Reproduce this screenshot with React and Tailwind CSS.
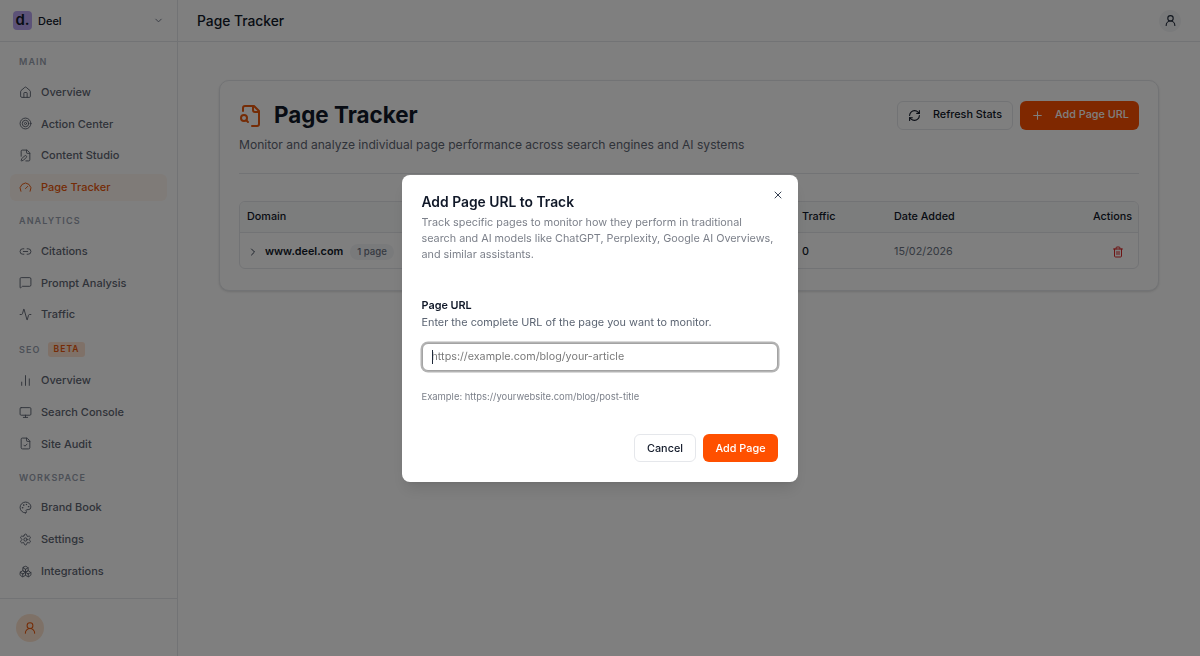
import {
  Activity,
  Boxes,
  ChartNoAxesColumn,
  ChevronDown,
  ChevronRight,
  FileCheck,
  FilePen,
  Gauge,
  House,
  Link2,
  MessageSquare,
  Monitor,
  Palette,
  Plus,
  RefreshCw,
  Settings,
  Target,
  Trash2,
  UserRound,
  X,
} from 'lucide-react'

const sections = [
  {
    title: 'MAIN',
    items: [
      { label: 'Overview', icon: House },
      { label: 'Action Center', icon: Target },
      { label: 'Content Studio', icon: FilePen },
      { label: 'Page Tracker', icon: Gauge, active: true },
    ],
  },
  {
    title: 'ANALYTICS',
    items: [
      { label: 'Citations', icon: Link2 },
      { label: 'Prompt Analysis', icon: MessageSquare },
      { label: 'Traffic', icon: Activity },
    ],
  },
  {
    title: 'SEO',
    beta: true,
    items: [
      { label: 'Overview', icon: ChartNoAxesColumn },
      { label: 'Search Console', icon: Monitor },
      { label: 'Site Audit', icon: FileCheck },
    ],
  },
  {
    title: 'WORKSPACE',
    items: [
      { label: 'Brand Book', icon: Palette },
      { label: 'Settings', icon: Settings },
      { label: 'Integrations', icon: Boxes },
    ],
  },
]

// lens sits outside the sheet, lucide's FileSearch has it inside now
function PageSearchIcon() {
  return (
    <svg
      className="h-[24px] w-[24px] shrink-0 text-[#ea580c]"
      viewBox="0 0 24 24"
      fill="none"
      stroke="currentColor"
      strokeWidth="2"
      strokeLinecap="round"
      strokeLinejoin="round"
    >
      <path d="M14 2v4a2 2 0 0 0 2 2h4" />
      <path d="M13 22h5a2 2 0 0 0 2-2V7l-5-5H6a2 2 0 0 0-2 2v3" />
      <circle cx="5" cy="14" r="3" />
      <path d="m9 18-1.5-1.5" />
    </svg>
  )
}

function Sidebar() {
  return (
    <aside className="flex h-full w-[178px] shrink-0 flex-col border-r border-gray-200 bg-white">
      <div className="flex h-[42px] shrink-0 items-center border-b border-gray-200 pl-[13px] pr-[13px]">
        <div className="flex h-[19px] w-[19px] items-center justify-center rounded-[4px] bg-[#b9a5f0] text-[15px] font-semibold leading-none text-gray-900">
          <span className="-mt-[2px]">d.</span>
        </div>
        <span className="ml-[6px] mt-[1px] flex-1 text-[11px] font-medium text-gray-900">Deel</span>
        <ChevronDown className="h-[11px] w-[11px] text-gray-500" />
      </div>
      <nav className="flex-1 pt-[13px]">
        {sections.map((section) => (
          <div key={section.title} className={`mb-[13px] px-[10px] ${section.beta ? 'pt-[1px]' : ''}`}>
            <div className="flex h-[14px] items-center gap-[8px] px-[9px] text-[9px] font-semibold tracking-[0.12em] text-gray-400">
              {section.title}
              {section.beta && (
                <span className="rounded-[3px] bg-[#ffe3d1] px-[5px] py-[3px] text-[8.5px] font-semibold leading-[9px] text-[#ea580c]">BETA</span>
              )}
            </div>
            <ul className={`flex flex-col gap-[4.6px] ${section.beta ? 'mt-[10.5px]' : 'mt-[9.5px]'}`}>
              {section.items.map((item) => (
                <li
                  key={item.label}
                  className={`flex h-[27.2px] items-center gap-[9px] rounded-[6px] px-[9px] text-[11px] font-medium ${
                    item.active ? 'bg-[#fff6f0] text-[#ea580c]' : 'text-[#5f6673]'
                  }`}
                >
                  <item.icon className="h-[13px] w-[13px] shrink-0" strokeWidth={1.75} />
                  {item.label}
                </li>
              ))}
            </ul>
          </div>
        ))}
      </nav>
      <div className="flex h-[60px] shrink-0 items-center border-t border-gray-200 pl-[16px]">
        <div className="flex h-[28px] w-[28px] items-center justify-center rounded-full bg-[#fde3cf] text-[#ea580c]">
          <UserRound className="h-[14px] w-[14px]" strokeWidth={1.75} />
        </div>
      </div>
    </aside>
  )
}

function PageCard() {
  return (
    <section className="rounded-[10px] border border-gray-200 bg-white p-[19px] pb-[21px] shadow-sm">
      <div className="flex items-start justify-between">
        <div>
          <div className="mt-[1px] flex items-center gap-[11px]">
            <PageSearchIcon />
            <h1 className="-mt-[1px] text-[22.4px] font-bold leading-[30px] text-gray-900">Page Tracker</h1>
          </div>
          <p className="mt-[6px] text-[12.08px] leading-[18px] text-[#5f6673]">
            Monitor and analyze individual page performance across search engines and AI systems
          </p>
        </div>
        <div className="mt-[1px] flex gap-[7px]">
          <button className="flex h-[29px] w-[116px] items-center rounded-[6px] border border-gray-200 bg-white pl-[10px] text-[10.8px] font-medium text-gray-900">
            <RefreshCw className="h-[13px] w-[13px]" />
            <span className="ml-[12px]">Refresh Stats</span>
          </button>
          <button className="flex h-[29px] w-[119px] items-center rounded-[6px] bg-[#ff5000] pl-[11px] text-[10.8px] font-medium text-white">
            <Plus className="h-[13px] w-[13px]" />
            <span className="ml-[11px]">Add Page URL</span>
          </button>
        </div>
      </div>
      <div className="mt-[19px] border-t border-gray-200" />
      <div className="mt-[27px] overflow-hidden rounded-[6px] border border-gray-200 text-[10.8px]">
        <div className="grid h-[31px] grid-cols-[555px_92px_1fr_60px] items-center border-b border-gray-200 bg-gray-50 pl-[7px] pr-[6px] font-medium text-gray-900">
          <span>Domain</span>
          <span>Traffic</span>
          <span>Date Added</span>
          <span className="text-right">Actions</span>
        </div>
        <div className="grid h-[35px] grid-cols-[555px_92px_1fr_60px] items-center pl-[7px] pr-[6px] pt-[3px]">
          <div className="flex items-center">
            <ChevronRight className="h-[12px] w-[12px] text-gray-700" />
            <span className="ml-[6px] font-semibold text-gray-900">www.deel.com</span>
            <span className="ml-[7px] rounded-full bg-gray-100 px-[7px] py-[1px] text-[9.6px] font-medium text-gray-500">1 page</span>
          </div>
          <span className="font-medium text-gray-900">0</span>
          <span className="text-gray-500">15/02/2026</span>
          <div className="flex justify-end pr-[8px]">
            <Trash2 className="h-[12px] w-[12px] text-[#dc2626]" />
          </div>
        </div>
      </div>
    </section>
  )
}

function AddPageModal() {
  return (
    <div className="fixed inset-0 flex items-center justify-center bg-black/50">
      <div className="relative w-[396px] rounded-[8px] bg-white pb-[20px] pl-[19.5px] pr-[20px] pt-[18px] shadow-lg">
        <X className="absolute right-[14px] top-[14px] h-[12px] w-[12px] text-gray-700" />
        <h2 className="text-[13.85px] font-semibold leading-[18px] text-gray-900">Add Page URL to Track</h2>
        <p className="mt-[4px] text-[10.8px] leading-[16px] text-[#7c808a]">
          Track specific pages to monitor how they perform in traditional search and AI models like ChatGPT, Perplexity, Google AI Overviews, and similar assistants.
        </p>
        <label className="mt-[34px] block text-[10.85px] font-semibold leading-[16px] text-gray-900">Page URL</label>
        <p className="mt-[1px] text-[10.85px] leading-[16px] text-[#5b6472]">Enter the complete URL of the page you want to monitor.</p>
        <div className="relative mt-[13px]">
          <input
            className="block h-[28px] w-full rounded-[6px] border border-[#a3a3a3] bg-white px-[9px] text-[10.75px] outline-none ring-[1.5px] ring-[#b4b4b4] placeholder:text-[#7a7a7a]"
            placeholder="https://example.com/blog/your-article"
            readOnly
          />
          <span className="absolute left-[10px] top-[7px] h-[14px] w-px bg-gray-800" />
        </div>
        <p className="mt-[20px] text-[9.43px] leading-[12px] text-[#7c808a]">Example: https://yourwebsite.com/blog/post-title</p>
        <div className="mt-[31px] flex justify-end gap-[7px]">
          <button className="h-[28px] w-[62px] rounded-[6px] border border-gray-200 bg-white pt-[1px] text-[10.85px] font-medium text-gray-900">Cancel</button>
          <button className="h-[28px] w-[75px] rounded-[6px] bg-[#ff5000] pt-[1px] text-[10.85px] font-medium text-white">Add Page</button>
        </div>
      </div>
    </div>
  )
}

export default function App() {
  return (
    <div className="flex h-[656px] w-[1200px] overflow-hidden bg-white font-['Inter',sans-serif]">
      <Sidebar />
      <div className="flex min-w-0 flex-1 flex-col">
        <header className="flex h-[42px] shrink-0 items-center justify-between border-b border-gray-200 pl-[19px] pr-[19px]">
          <span className="mt-[1px] text-[13.8px] font-medium text-gray-900">Page Tracker</span>
          <div className="flex h-[22px] w-[22px] items-center justify-center rounded-full bg-gray-100 text-gray-800">
            <UserRound className="h-[13px] w-[13px]" />
          </div>
        </header>
        <main className="flex-1 px-[41px] pt-[38px]">
          <PageCard />
        </main>
      </div>
      <AddPageModal />
    </div>
  )
}
